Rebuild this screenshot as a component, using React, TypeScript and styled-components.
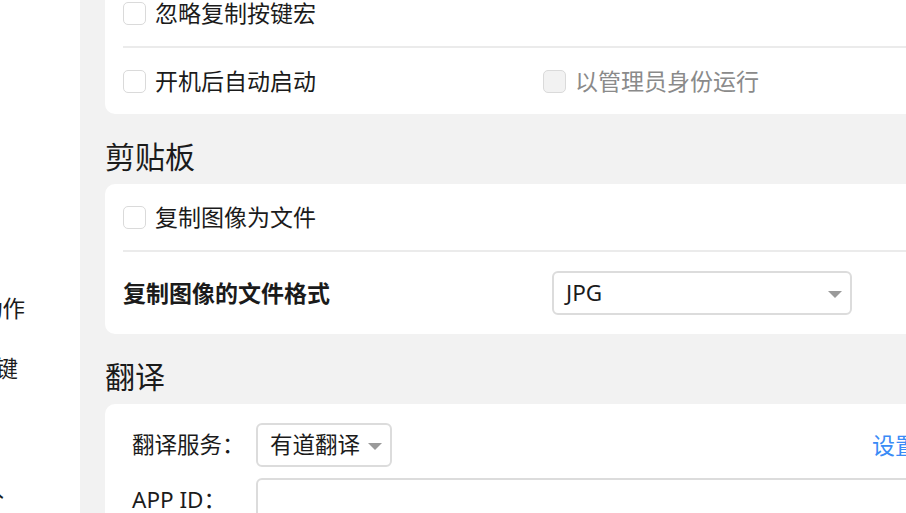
import React from "react";
import styled, { createGlobalStyle } from "styled-components";

const Global = createGlobalStyle`
  html, body { margin: 0; padding: 0; }
  body {
    font-family: "Noto Sans", "Noto Sans CJK SC", sans-serif;
    color: #1b1b1b;
    background: #f2f2f2;
  }
`;

const Shell = styled.div`
  display: flex;
  width: 906px;
  height: 513px;
  overflow: hidden;
`;

const Sidebar = styled.nav`
  width: 80px;
  flex: none;
  background: #ffffff;
  display: flex;
  flex-direction: column;
  padding-top: 279px;
  box-sizing: border-box;
  overflow: hidden;
`;

const NavItem = styled.div<{ $inset: number }>`
  height: 60px;
  line-height: 60px;
  display: flex;
  justify-content: flex-end;
  padding-right: ${(p) => p.$inset}px;
  font-size: 22.5px;
  white-space: nowrap;
  color: #1b1b1b;
`;

const Main = styled.main`
  flex: 1;
  background: #f2f2f2;
  padding-left: 25px;
  overflow: hidden;
`;

const Content = styled.div`
  width: 840px;
  margin-top: -20px;
  display: flex;
  flex-direction: column;
`;

const Card = styled.section`
  background: #ffffff;
  border-radius: 10px;
`;

const Row = styled.div<{ $h: number }>`
  height: ${(p) => p.$h}px;
  display: grid;
  grid-template-columns: 420px 1fr;
  align-items: center;
  padding: 0 18px;
`;

const FormatRow = styled.div`
  height: 82px;
  display: grid;
  grid-template-columns: 429px 300px;
  align-items: center;
  padding: 0 18px;
`;

const Divider = styled.div`
  height: 2px;
  background: #ebebeb;
  margin-left: 18px;
`;

const Check = styled.label<{ $disabled?: boolean }>`
  display: flex;
  align-items: center;
  gap: 9px;
  font-size: 23px;
  line-height: 30px;
  color: ${(p) => (p.$disabled ? "#8a8a8a" : "#1b1b1b")};
`;

const Box = styled.span<{ $disabled?: boolean }>`
  width: 23px;
  height: 23px;
  box-sizing: border-box;
  border: 1.5px solid #dadada;
  border-radius: 5px;
  background: ${(p) => (p.$disabled ? "#f2f2f2" : "#ffffff")};
  flex: none;
`;

const SectionTitle = styled.h2`
  margin: 0;
  padding: 23px 0 7px;
  font-size: 30px;
  line-height: 40px;
  font-weight: 400;
  color: #1b1b1b;
`;

const BoldLabel = styled.span`
  font-size: 23px;
  line-height: 30px;
  font-weight: 700;
`;

const Select = styled.div<{ $w: number }>`
  width: ${(p) => p.$w}px;
  height: 44px;
  box-sizing: border-box;
  border: 2px solid #dcdcdc;
  border-radius: 6px;
  background: #fff;
  display: flex;
  align-items: center;
  justify-content: space-between;
  padding: 0 8px 0 12px;
  font-size: 22.5px;
  line-height: 30px;
`;

const Arrow = styled.span`
  width: 0;
  height: 0;
  border-left: 7px solid transparent;
  border-right: 7px solid transparent;
  border-top: 7px solid #9a9a9a;
  margin-top: 2px;
`;

const TransCard = styled(Card)`
  padding: 19px 27px 20px;
  display: flex;
  flex-direction: column;
  gap: 11px;
`;

const FieldRow = styled.div`
  display: grid;
  grid-template-columns: 124px auto 1fr auto;
  align-items: center;
`;

const FieldLabel = styled.span`
  font-size: 22.5px;
  line-height: 30px;
`;

const Link = styled.a`
  font-size: 23px;
  line-height: 30px;
  color: #3a8bf6;
  text-decoration: none;
`;

const Input = styled.div`
  grid-column: 2 / 5;
  height: 44px;
  box-sizing: border-box;
  border: 2px solid #dcdcdc;
  border-radius: 6px;
  background: #fff;
  margin-right: -40px;
`;

export default function App() {
  return (
    <>
      <Global />
      <Shell>
        <Sidebar>
          <NavItem $inset={55}>鼠标动作</NavItem>
          <NavItem $inset={62}>全局快捷键</NavItem>
          <NavItem $inset={100}>翻译</NavItem>
          <NavItem $inset={76}>导入</NavItem>
        </Sidebar>
        <Main>
          <Content>
            <Card>
              <Row $h={66}>
                <Check>
                  <Box />
                  忽略复制按键宏
                </Check>
              </Row>
              <Divider />
              <Row $h={66}>
                <Check>
                  <Box />
                  开机后自动启动
                </Check>
                <Check $disabled>
                  <Box $disabled />
                  以管理员身份运行
                </Check>
              </Row>
            </Card>
            <SectionTitle>剪贴板</SectionTitle>
            <Card>
              <Row $h={66}>
                <Check>
                  <Box />
                  复制图像为文件
                </Check>
              </Row>
              <Divider />
              <FormatRow>
                <BoldLabel>复制图像的文件格式</BoldLabel>
                <Select $w={300}>
                  JPG
                  <Arrow />
                </Select>
              </FormatRow>
            </Card>
            <SectionTitle>翻译</SectionTitle>
            <TransCard>
              <FieldRow>
                <FieldLabel>翻译服务：</FieldLabel>
                <Select $w={136}>
                  有道翻译
                  <Arrow />
                </Select>
                <span />
                <Link>设置</Link>
              </FieldRow>
              <FieldRow>
                <FieldLabel>APP ID：</FieldLabel>
                <Input />
              </FieldRow>
            </TransCard>
          </Content>
        </Main>
      </Shell>
    </>
  );
}
